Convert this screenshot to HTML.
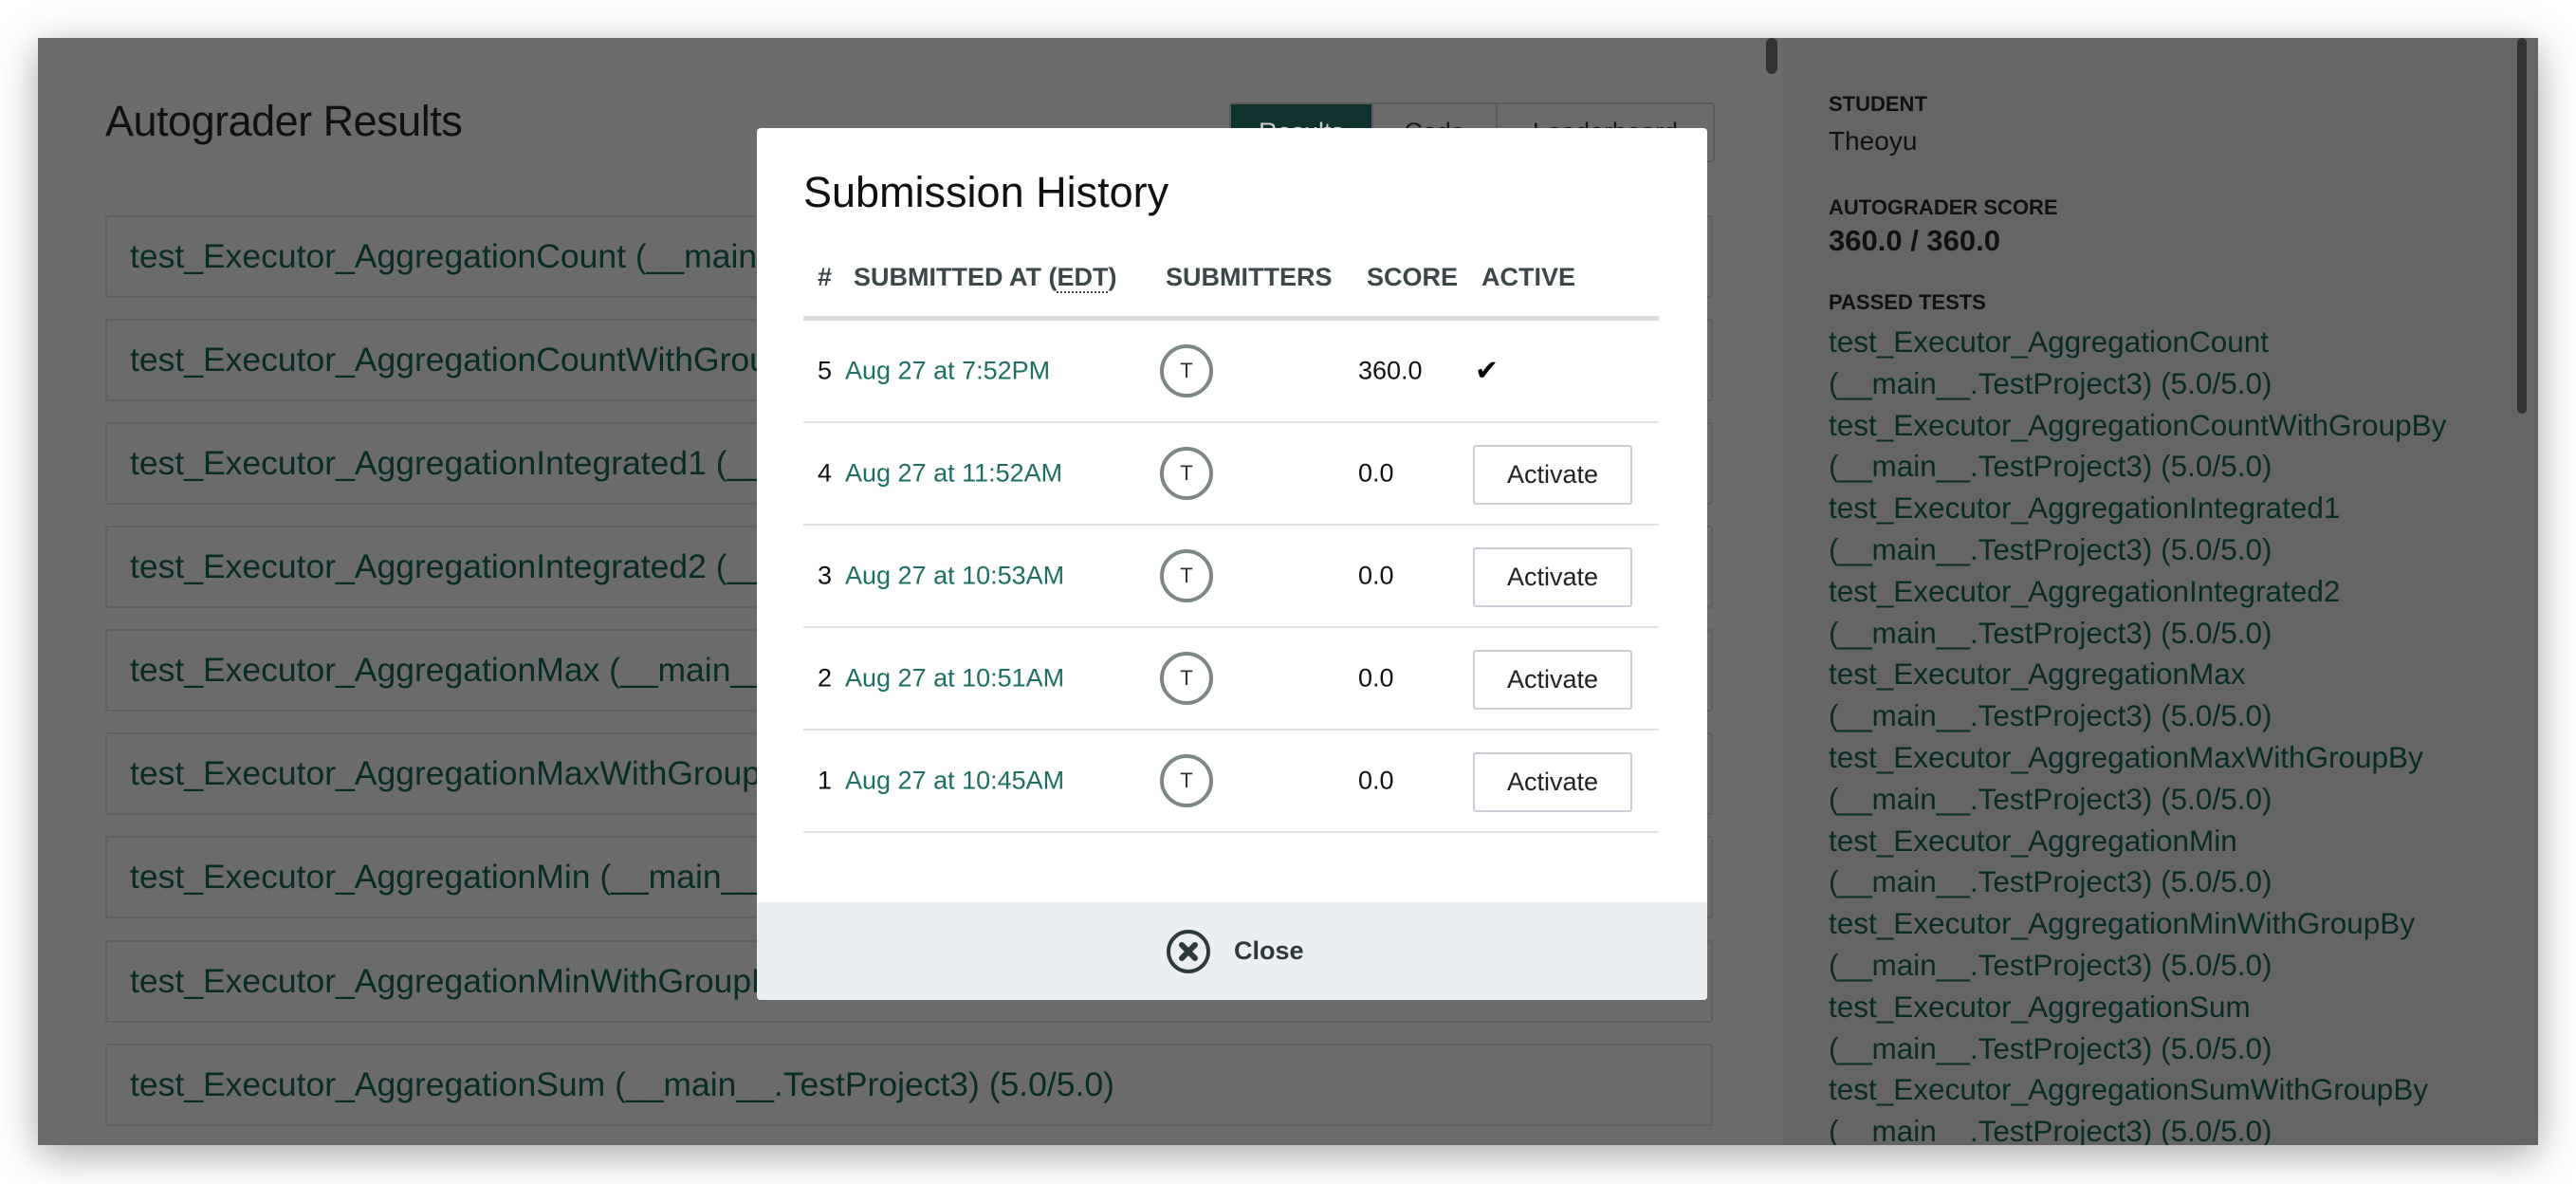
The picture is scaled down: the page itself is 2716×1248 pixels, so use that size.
<!DOCTYPE html>
<html><head><meta charset="utf-8"><style>
*{box-sizing:border-box;margin:0;padding:0}
body{width:2716px;height:1248px;background:#fff;font-family:"Liberation Sans",sans-serif;position:relative;overflow:hidden}
.win{position:absolute;left:40px;top:40px;width:2636px;height:1167px;background:#6b6b6b;box-shadow:0 10px 40px rgba(0,0,0,.35);overflow:hidden}
.side{position:absolute;left:1840px;top:0;width:796px;height:100%;background:#656565}
.h1{position:absolute;left:71px;top:62px;font-size:45px;color:#111;font-weight:300;letter-spacing:-0.5px}
.tabs{position:absolute;left:1256px;top:68px;width:512px;height:63px;border:2px solid #5a5a5a;border-radius:4px;display:flex;font-size:27px;color:#1a1a1a}
.tabs div{display:flex;align-items:center;justify-content:center;border-right:2px solid #5a5a5a}
.test{position:absolute;left:71px;width:1695px;height:87px;border:2px solid #5f5f5f;border-radius:3px;background:#6b6b6b;color:#082c26;font-size:35.5px;padding-left:24px;line-height:83px;white-space:nowrap;overflow:hidden}
.lbl{position:absolute;left:1888px;font-size:22px;font-weight:bold;color:#111}
.sb{position:absolute;left:1888px;font-size:31.5px;color:#082c26;line-height:43.8px;white-space:nowrap}
.modal{position:absolute;left:798px;top:135px;width:1002px;height:919px;background:#fff;border-radius:4px;overflow:hidden}
.mt{position:absolute;left:49px;top:42px;font-size:45px;color:#111;font-weight:300}
.th{position:absolute;top:142px;font-size:27px;font-weight:bold;color:#3b4748}
.hl{position:absolute;left:49px;top:198px;width:902px;height:5px;background:#d8dde2}
.row{position:absolute;left:49px;width:902px;height:108px;border-bottom:2px solid #dde1e5}
.row span{position:absolute;top:50%;transform:translateY(-50%);font-size:27px}
.n{left:15px;color:#111}.d{left:44px;color:#1b6f63}.s{left:585px;color:#111}
.av{position:absolute;left:376px;top:25px;width:56px;height:56px;border:4px solid #7d8786;border-radius:50%;display:flex;align-items:center;justify-content:center;font-size:22px;color:#333}
.btn{position:absolute;left:706px;top:23px;width:168px;height:63px;border:2px solid #c9cfd6;border-radius:3px;display:flex;align-items:center;justify-content:center;font-size:27px;color:#222}
.foot{position:absolute;left:0;top:816px;width:100%;height:103px;background:#eceff2}
</style></head><body>
<div class="win">
<div class="side"></div>
<div style="position:absolute;left:1822px;top:0;width:12px;height:38px;background:#333;border-radius:6px"></div>
<div style="position:absolute;left:2614px;top:0;width:10px;height:396px;background:#333;border-radius:5px"></div>
<div class="h1">Autograder Results</div>
<div class="tabs"><div style="width:150px;background:#11332f;color:#ccc">Results</div><div style="width:131px">Code</div><div style="flex:1;border-right:none">Leaderboard</div></div>
<div class="test" style="top:187px">test_Executor_AggregationCount (__main__.TestProject3) (5.0/5.0)</div>
<div class="test" style="top:296px">test_Executor_AggregationCountWithGroupBy (__main__.TestProject3) (5.0/5.0)</div>
<div class="test" style="top:405px">test_Executor_AggregationIntegrated1 (__main__.TestProject3) (5.0/5.0)</div>
<div class="test" style="top:514px">test_Executor_AggregationIntegrated2 (__main__.TestProject3) (5.0/5.0)</div>
<div class="test" style="top:623px">test_Executor_AggregationMax (__main__.TestProject3) (5.0/5.0)</div>
<div class="test" style="top:732px">test_Executor_AggregationMaxWithGroupBy (__main__.TestProject3) (5.0/5.0)</div>
<div class="test" style="top:841px">test_Executor_AggregationMin (__main__.TestProject3) (5.0/5.0)</div>
<div class="test" style="top:951px">test_Executor_AggregationMinWithGroupBy (__main__.TestProject3) (5.0/5.0)</div>
<div class="test" style="top:1060px">test_Executor_AggregationSum (__main__.TestProject3) (5.0/5.0)</div>
<div class="lbl" style="top:57px">STUDENT</div>
<div style="position:absolute;left:1888px;top:93px;font-size:28px;color:#111">Theoyu</div>
<div class="lbl" style="top:166px">AUTOGRADER SCORE</div>
<div style="position:absolute;left:1888px;top:196px;font-size:31px;font-weight:bold;color:#111">360.0 / 360.0</div>
<div class="lbl" style="top:266px">PASSED TESTS</div>
<div class="sb" style="top:299px">test_Executor_AggregationCount<br>(__main__.TestProject3) (5.0/5.0)<br>test_Executor_AggregationCountWithGroupBy<br>(__main__.TestProject3) (5.0/5.0)<br>test_Executor_AggregationIntegrated1<br>(__main__.TestProject3) (5.0/5.0)<br>test_Executor_AggregationIntegrated2<br>(__main__.TestProject3) (5.0/5.0)<br>test_Executor_AggregationMax<br>(__main__.TestProject3) (5.0/5.0)<br>test_Executor_AggregationMaxWithGroupBy<br>(__main__.TestProject3) (5.0/5.0)<br>test_Executor_AggregationMin<br>(__main__.TestProject3) (5.0/5.0)<br>test_Executor_AggregationMinWithGroupBy<br>(__main__.TestProject3) (5.0/5.0)<br>test_Executor_AggregationSum<br>(__main__.TestProject3) (5.0/5.0)<br>test_Executor_AggregationSumWithGroupBy<br>(__main__.TestProject3) (5.0/5.0)</div>
</div>
<div class="modal">
<div class="mt">Submission History</div>
<div class="th" style="left:64px">#</div>
<div class="th" style="left:102px">SUBMITTED AT (<span style="border-bottom:2px dotted #3b4748">EDT</span>)</div>
<div class="th" style="left:431px">SUBMITTERS</div>
<div class="th" style="left:643px">SCORE</div>
<div class="th" style="left:764px">ACTIVE</div>
<div class="hl"></div>
<div class="row" style="top:203px"><span class="n">5</span><span class="d">Aug 27 at 7:52PM</span><div class="av">T</div><span class="s">360.0</span><span style="left:708px;font-size:30px">✔</span></div>
<div class="row" style="top:311px"><span class="n">4</span><span class="d">Aug 27 at 11:52AM</span><div class="av">T</div><span class="s">0.0</span><div class="btn">Activate</div></div>
<div class="row" style="top:419px"><span class="n">3</span><span class="d">Aug 27 at 10:53AM</span><div class="av">T</div><span class="s">0.0</span><div class="btn">Activate</div></div>
<div class="row" style="top:527px"><span class="n">2</span><span class="d">Aug 27 at 10:51AM</span><div class="av">T</div><span class="s">0.0</span><div class="btn">Activate</div></div>
<div class="row" style="top:635px"><span class="n">1</span><span class="d">Aug 27 at 10:45AM</span><div class="av">T</div><span class="s">0.0</span><div class="btn">Activate</div></div>
<div class="foot">
<svg style="position:absolute;left:431px;top:28px" width="48" height="48" viewBox="0 0 48 48"><circle cx="24" cy="24" r="21" fill="none" stroke="#2d3a3c" stroke-width="4"/><path d="M17 17L31 31M31 17L17 31" stroke="#2d3a3c" stroke-width="6" stroke-linecap="round"/></svg>
<div style="position:absolute;left:503px;top:36px;font-size:27px;font-weight:bold;color:#2d3a3c">Close</div>
</div>
</div>
</body></html>
